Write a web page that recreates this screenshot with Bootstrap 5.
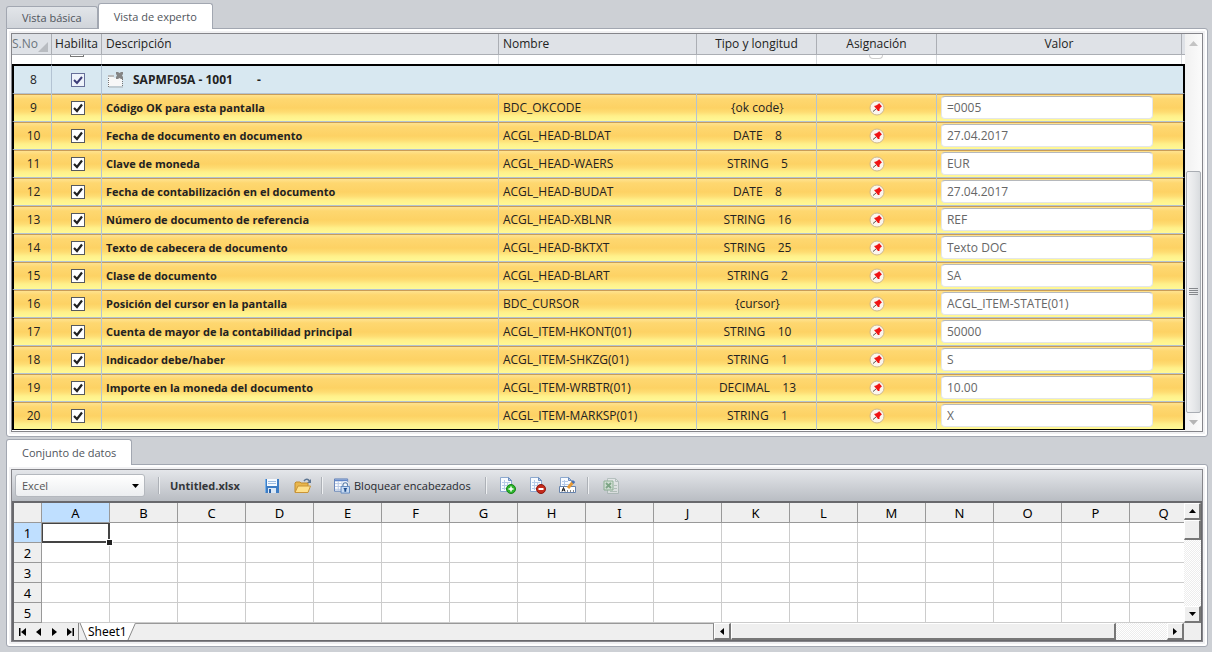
<!DOCTYPE html>
<html lang="es">
<head>
<meta charset="utf-8">
<meta name="viewport" content="width=device-width, initial-scale=1">
<title>Vista de experto</title>
<link href="https://cdn.jsdelivr.net/npm/bootstrap@5.3.0/dist/css/bootstrap.min.css" rel="stylesheet">
<style>
body{background:#cdd0d5;font:12px/16px "Open Sans","Noto Sans",sans-serif;color:#222}
button{font:inherit;padding:0}
main{padding:3px 4px 6px 6px}
/* tabs */
.nav-tabs{--bs-nav-tabs-border-width:0px;padding-left:0}
.nav-tabs .nav-link{margin:0;height:22px;padding:0 15px;border:1px solid #a2a7b1;border-bottom:0;border-radius:3px 3px 0 0;background:linear-gradient(#e2e5e9,#d0d4da);color:#50555c;font-size:11px;line-height:20px}
.nav-tabs .nav-link.active{height:26px;margin-bottom:-1px;background:#fff;border-color:#a2a7b1;color:#50555c;line-height:26px;position:relative;z-index:1}
.panel{background:#f1f1f3;border:1px solid #a2a7b1;border-radius:0 3px 3px 3px;padding:4px;box-shadow:inset 0 0 0 2px #fff}
.frame{border:1px solid #85858a;background:#fff}
.panel+.nav-tabs{margin-top:2px}
/* field grid */
.fields{table-layout:fixed;border-collapse:separate;border-spacing:0;width:100%;margin-bottom:1px}
.fields th{height:21px;background:#dfe2e7;border-right:1px solid #abaeb4;border-bottom:1px solid #abaeb4;font-weight:400;padding:0 4px;line-height:18px;white-space:nowrap;overflow:hidden}
.fields th.tight{padding:0}
.fields th.end,.fields .peek td.end{border-right:0}
.fields td{height:28px;padding:0 4px;border-right:1px solid #b3c3d3;border-bottom:1px solid #b3c3d3;vertical-align:middle;white-space:pre}
.fields td.text-center{padding:0 3px 0 5px}
.fields .peek td{height:9px;padding:0;border-bottom:0;border-color:#d5d8dc;line-height:0;vertical-align:top}
.fields .group td{height:30px;background:#d8e8f1;border-top:2px solid #000}
.fields .item td{background:linear-gradient(#c99d58 1px,#ffe38f 1px,#fed770 5px,#fdd264 14px,#fedc72 18px,#fff08a 22px,#fff996 27px)}
.fields .group td:first-child,.fields .item td:first-child{border-left:2px solid #000}
.fields .group td:last-child,.fields .item td:last-child{border-right:2px solid #000}
.fields .item:last-child td{border-bottom-color:#000}
.desc{font-weight:700;font-size:11px}
.stub{width:14px;height:2px;border:1px solid #777;border-top:0}
.arc{width:14px;height:4px;border:1px solid #ccc;border-top:0;border-radius:0 0 7px 7px}
.tick{appearance:none;width:14px;height:14px;margin:0;border:1px solid #55595e;background:#fff url("data:image/svg+xml,%3Csvg xmlns='http://www.w3.org/2000/svg' viewBox='0 0 12 12'%3E%3Cpath d='M2 6l3 3 5-6.5' fill='none' stroke='%23222' stroke-width='2.2'/%3E%3C/svg%3E");vertical-align:middle}
.tick.alt{border-color:#666f99;background-color:#eef3fb;background-image:url("data:image/svg+xml,%3Csvg xmlns='http://www.w3.org/2000/svg' viewBox='0 0 12 12'%3E%3Cpath d='M2 6l3 3 5-6' fill='none' stroke='%233c3c78' stroke-width='2'/%3E%3C/svg%3E")}
.val{display:block;width:212px;height:23px;border:1px solid #e3e6ea;border-top-color:#b5b8bc;border-radius:4px;padding:0 5px;background:#fff;color:#666;font-size:12px;line-height:16px}
.pin{width:16px;height:16px;border:0;background:none;line-height:0;display:inline-block;vertical-align:middle}
.vbar{flex:none;width:17px;background:linear-gradient(90deg,#f1f1f1,#fbfbfb)}
.vbar button{height:18px;border:0;background:none;line-height:0}
.grip{height:242px;margin:0 1px;border:1px solid #a9adb3;border-radius:2px;background:linear-gradient(90deg,#f3f3f4,#e5e7e9 60%,#d9dcdf)}
/* toolbar */
.tools{height:31px;padding:0 3px;background:linear-gradient(#e4e6ea,#b9bdc3);font-size:11px}
.tools button{border:0;background:none;line-height:16px;color:#26292e}
.tools svg{display:block}
.pick{appearance:none;width:130px;height:23px;border:1px solid #b4b8be;border-radius:3px;padding:0 6px;color:#555;font-size:11px;background:url("data:image/svg+xml,%3Csvg xmlns='http://www.w3.org/2000/svg' viewBox='0 0 8 4'%3E%3Cpath d='M0 0h7L3.500 4z'/%3E%3C/svg%3E") no-repeat right 4px center/8px 4px,linear-gradient(#fff,#eceef0)}
.rule{width:2px;height:17px;background:#adb1b7;border-right:1px solid #eef0f2}
.book-name{width:94px;font-weight:700;color:#33363a}
/* sheet */
.book{border:solid #68686c;border-width:2px 1px 1px 2px}
.view{overflow:hidden;height:120px;min-width:0}
.sheet{table-layout:fixed;border-collapse:separate;border-spacing:0;width:1184px;font-family:"Noto Sans",sans-serif;font-size:13px;color:#000}
.sheet th{background:#efefef;border-right:1px solid #999;border-bottom:1px solid #999;font-weight:400;text-align:center;padding:0;line-height:18px}
.sheet td{border-right:1px solid #ccc;border-bottom:1px solid #ccc;background:#fff;padding:0}
.sheet tr{height:20px}
.sheet .on{background:#bfdfff}
.sheet td.cur{position:relative;box-shadow:inset 0 0 0 1px #444;border-color:#444}
.cur::after{content:"";position:absolute;right:-3px;bottom:-3px;width:5px;height:5px;background:#222;outline:1px solid #fff}
.raised{background:#efefef;border:1px solid #fff;border-right:2px solid #777;border-bottom:2px solid #777;line-height:0;display:flex;align-items:center;justify-content:center}
.track{background:repeating-conic-gradient(#fff 0 25%,#ededed 0 50%) 0 0/2px 2px}
.sbar{flex:none;width:17px}
.sbar .raised,.hbar .raised{flex:none}
.foot{height:17px;background:#efefef}
.step{width:16px;border:0;background:none;line-height:0}
.leaf{font-size:12px;line-height:17px;color:#000;font-family:"Noto Sans",sans-serif}
.rest{border-top:1px solid #999;border-right:1px solid #888}
</style>
</head>
<body>
<main>
<ul class="nav nav-tabs align-items-end">
<li class="nav-item"><button class="nav-link" type="button">Vista básica</button></li>
<li class="nav-item"><button class="nav-link active" type="button">Vista de experto</button></li>
</ul>
<section class="panel">
<div class="frame d-flex">
<div class="flex-grow-1 overflow-hidden">
<table class="fields">
<colgroup><col style="width:40px"><col style="width:50px"><col><col style="width:198px"><col style="width:120px"><col style="width:120px"><col style="width:245px"><col style="width:3px"></colgroup>
<thead><tr>
<th class="tight"><div class="d-flex align-items-end text-secondary">S.No<svg class="flex-shrink-0" width="10" height="12"><path d="M10 1v10H0z" fill="#b9bcc1"/></svg></div></th>
<th class="tight text-center" style="line-height:16px">Habilita</th><th>Descripción</th><th>Nombre</th><th class="text-center">Tipo y longitud</th><th class="text-center">Asignación</th><th class="text-center">Valor</th><th class="tight end"></th>
</tr></thead>
<tbody id="rows">
<tr class="peek"><td></td><td><div class="stub mx-auto"></div></td><td></td><td></td><td></td><td><div class="arc mx-auto"></div></td><td></td><td class="end"></td></tr>
<tr class="group"><td class="text-center">8</td><td class="text-center"><input class="tick alt" type="checkbox" checked aria-label="Habilitar 8"></td>
<td colspan="6" class="fw-bold"><div class="d-flex align-items-center"><svg width="18" height="18"><path d="M2 5h5l1 2h8v8H2z" fill="#f7f7f7"/><path d="M2 4h6v2H2z" fill="#bbb"/><path d="M2.500 7v9h14V8" fill="none" stroke="#777" stroke-dasharray="1 1"/><path d="M10 1h2l1.500 1L15 1h2v2l-1 1.500 1 1.500v2h-2l-1.500-1L12 8h-2V6l1-1.500L10 3z" fill="#858585"/></svg><span style="margin-left:9px">SAPMF05A - 1001</span><span class="ms-4">-</span></div></td></tr>
</tbody>
</table>
</div>
<div class="vbar d-flex flex-column">
<button type="button" aria-label="Subir"><svg width="9" height="5"><path d="M0 5l4.500-5L9 5z" fill="#c4c4c4"/></svg></button>
<div class="flex-grow-1"></div>
<div class="grip d-flex align-items-center justify-content-center"><svg width="9" height="8"><path d="M0 .5h9M0 2.500h9M0 4.500h9M0 6.500h9" stroke="#85888c"/></svg></div>
<button type="button" aria-label="Bajar"><svg width="9" height="5"><path d="M0 0l4.500 5L9 0z" fill="#b5b5b5"/></svg></button>
</div>
</div>
</section>

<ul class="nav nav-tabs align-items-end">
<li class="nav-item"><button class="nav-link active" type="button">Conjunto de datos</button></li>
</ul>
<section class="panel">
<div class="frame">
<div class="tools d-flex align-items-center">
<select class="pick" aria-label="Origen de datos"><option>Excel</option></select>
<span class="rule" style="margin-left:13px"></span>
<span class="book-name" style="margin-left:10px">Untitled.xlsx</span>
<button type="button" aria-label="Guardar"><svg width="16" height="16"><path d="M1 1h14v14H2l-1-1z" fill="#3d7cc4"/><path d="M3 1h10v7H3z" fill="#f4f9ff"/><path d="M4 3.500h8M4 5.500h8" stroke="#9bbbe0"/><path d="M4 10h8v5H4z" fill="#dbe8f6"/><path d="M5 11h2v4H5z" fill="#2c62a6"/><path d="M1.500 1v13" stroke="#74b0ea"/></svg></button>
<button type="button" aria-label="Abrir" style="margin-left:14px"><svg width="18" height="16"><path d="M1 5l1-1h4l1 1h7v9H1z" fill="#e9b64c" stroke="#c18b2c"/><path d="M1 14.500L4 8h12.500L14 14.500z" fill="#ffe08a" stroke="#c99437"/><path d="M10 3c2-2.500 4-2 5.500 0" fill="none" stroke="#5c7593" stroke-width="1.500"/><path d="M17 1v4h-4z" fill="#5c7593"/></svg></button>
<span class="rule" style="margin-left:9px"></span>
<button type="button" class="d-flex align-items-center" style="margin-left:11px"><svg class="me-1" width="16" height="16" viewBox="0 0 17 16"><path d="M.5.5h14v13H.5z" fill="#fff" stroke="#5d7db5"/><path d="M1 1h13v2H1z" fill="#6287c8"/><path d="M4.500 3v10M8.500 3v10M1 5.500h13M1 8.500h13M1 11.500h13" stroke="#b3c5e3"/><path d="M9.500 9V7q0-2.500 2.500-2.500T14.500 7v2" fill="none" stroke="#eef4fa" stroke-width="3"/><path d="M9.500 9V7q0-2.500 2.500-2.500T14.500 7v2" fill="none" stroke="#5f7fa8" stroke-width="1.200"/><path d="M7.500 8.500h9v7h-9z" fill="#c9dcf3" stroke="#5f87be"/><path d="M10 10h4l-1 2v2h-2v-2z" fill="#214f8e"/></svg>Bloquear encabezados</button>
<span class="rule" style="margin-left:14px"></span>
<button type="button" aria-label="Añadir hoja" style="margin-left:12px"><svg width="17" height="17"><path d="M1.500.5h8l3 3v11h-11z" fill="#f8fbff" stroke="#8da9cf"/><path d="M9.500.5v3h3z" fill="#b4c9e8" stroke="#6b8dbe"/><path d="M3 5.500h8M3 8.500h8M3 11.500h8M5.500 3v10M8.500 5v8" stroke="#b5cae8"/><circle cx="12" cy="12" r="4.500" fill="#2cb62c" stroke="#168216"/><path d="M12 9.500v5M9.500 12h5" stroke="#fff" stroke-width="1.500"/></svg></button>
<button type="button" aria-label="Quitar hoja" style="margin-left:13px"><svg width="17" height="17"><path d="M1.500.5h8l3 3v11h-11z" fill="#f8fbff" stroke="#8da9cf"/><path d="M9.500.5v3h3z" fill="#b4c9e8" stroke="#6b8dbe"/><path d="M3 5.500h8M3 8.500h8M3 11.500h8M5.500 3v10M8.500 5v8" stroke="#b5cae8"/><circle cx="12" cy="12" r="4.500" fill="#c52a1b" stroke="#8c170f"/><path d="M9.500 12h5" stroke="#fff" stroke-width="2"/></svg></button>
<button type="button" aria-label="Renombrar hoja" style="margin-left:13px"><svg width="17" height="17"><path d="M1.500.5h8l3 3v11h-11z" fill="#f8fbff" stroke="#8da9cf"/><path d="M9.500.5v3h3z" fill="#b4c9e8" stroke="#6b8dbe"/><path d="M3 4.500h6M3 7.500h8M5.500 3v6" stroke="#b5cae8"/><path d="M.5 9.500h16v6H.5z" fill="#fff" stroke="#6683ad"/><path d="M3 14.500l1.500-4 1.500 4M3.500 13h2M8 14h1M11 14h1M14 14h1" fill="none" stroke="#111"/><path d="M9 11l5-6" stroke="#e89a33" stroke-width="3"/><path d="M13.500 6l1.500-2" stroke="#4670b5" stroke-width="3"/></svg></button>
<span class="rule" style="margin-left:11px"></span>
<button type="button" aria-label="Abrir en Excel" disabled style="margin-left:14px"><svg width="17" height="16" opacity=".5"><path d="M4.500.5h8l3 3v12h-11z" fill="#eef2ee" stroke="#94a8a0"/><path d="M12.500.5v3h3" fill="none" stroke="#94a8a0"/><path d="M1 3h9v9H1z" fill="#d5ead2" stroke="#4d9052"/><path d="M3 5l5 5M8 5l-5 5" stroke="#2d7a36" stroke-width="1.800"/><path d="M11 7.500h3M11 10.500h3M7 13.500h7" stroke="#99b2a1"/></svg></button>
</div>
<div class="book">
<div class="d-flex">
<div class="view flex-grow-1"><table class="sheet" id="sheet"></table></div>
<div class="sbar track d-flex flex-column">
<button class="raised" type="button" style="height:17px" aria-label="Fila anterior"><svg width="7" height="4"><path d="M0 4l3.500-4L7 4z"/></svg></button>
<div class="raised" style="height:20px"></div><div class="flex-grow-1"></div>
<button class="raised" type="button" style="height:17px" aria-label="Fila siguiente"><svg width="7" height="4"><path d="M0 0l3.500 4L7 0z"/></svg></button>
</div>
</div>
<div class="foot d-flex">
<button class="step" type="button" aria-label="Primera"><svg width="7" height="8"><path d="M0 0h1.500v8H0zM7 0v8L2 4z"/></svg></button>
<button class="step" type="button" aria-label="Anterior"><svg width="5" height="8"><path d="M5 0v8L0 4z"/></svg></button>
<button class="step" type="button" aria-label="Siguiente"><svg width="5" height="8"><path d="M0 0v8l5-4z"/></svg></button>
<button class="step" type="button" aria-label="Última"><svg width="7" height="8"><path d="M5.500 0H7v8H5.500zM0 0v8l5-4z"/></svg></button>
<svg width="10" height="17"><path d="M2 0h8v17H9z" fill="#fff"/><path d="M.5 0v17M2 0l7 17" fill="none" stroke="#888"/></svg>
<span class="bg-white leaf">Sheet1</span>
<svg width="9" height="17"><path d="M0 0h9L1 17H0z" fill="#fff"/><path d="M8.500 0L1 17" stroke="#888"/></svg>
<div class="rest flex-grow-1"></div>
<div class="hbar track d-flex" style="width:470px">
<button class="raised" type="button" style="width:17px" aria-label="Columna anterior"><svg width="4" height="7"><path d="M4 0v7L0 3.500z"/></svg></button>
<div class="raised" style="width:385px"></div><div class="flex-grow-1"></div>
<button class="raised" type="button" style="width:17px" aria-label="Columna siguiente"><svg width="4" height="7"><path d="M0 0v7l4-3.500z"/></svg></button>
</div>
<div class="sbar"></div>
</div>
</div>
</div>
</section>
</main>
<script src="https://cdn.jsdelivr.net/npm/bootstrap@5.3.0/dist/js/bootstrap.bundle.min.js"></script>
<script>
const items=[
['Código OK para esta pantalla','BDC_OKCODE','{ok code}','=0005'],
['Fecha de documento en documento','ACGL_HEAD-BLDAT','DATE    8','27.04.2017'],
['Clave de moneda','ACGL_HEAD-WAERS','STRING    5','EUR'],
['Fecha de contabilización en el documento','ACGL_HEAD-BUDAT','DATE    8','27.04.2017'],
['Número de documento de referencia','ACGL_HEAD-XBLNR','STRING    16','REF'],
['Texto de cabecera de documento','ACGL_HEAD-BKTXT','STRING    25','Texto DOC'],
['Clase de documento','ACGL_HEAD-BLART','STRING    2','SA'],
['Posición del cursor en la pantalla','BDC_CURSOR','{cursor}','ACGL_ITEM-STATE(01)'],
['Cuenta de mayor de la contabilidad principal','ACGL_ITEM-HKONT(01)','STRING    10','50000'],
['Indicador debe/haber','ACGL_ITEM-SHKZG(01)','STRING    1','S'],
['Importe en la moneda del documento','ACGL_ITEM-WRBTR(01)','DECIMAL    13','10.00'],
['','ACGL_ITEM-MARKSP(01)','STRING    1','X']];
const pin='<svg width="16" height="16"><circle cx="8" cy="8" r="7" fill="#fbf5ee" stroke="#cfb98c"/><path d="M4 11.500L7 9" stroke="#555"/><path d="M5 6l2-.5L9.500 4l.5-1 3 3.500-1 .5-1.500 2v2L9 11z" fill="#f01414"/></svg>';
document.getElementById('rows').insertAdjacentHTML('beforeend',items.map((r,i)=>`<tr class="item"><td class="text-center">${i+9}</td><td class="text-center"><input class="tick" type="checkbox" checked aria-label="Habilitar ${i+9}"></td><td class="desc">${r[0]}</td><td>${r[1]}</td><td class="text-center">${r[2]}</td><td class="text-center"><button type="button" class="pin" aria-label="Asignación ${i+9}">${pin}</button></td><td colspan="2"><input class="val" type="text" value="${r[3]}" aria-label="Valor ${i+9}"></td></tr>`).join(''));
const cols=[...'ABCDEFGHIJKLMNOPQ'];
let h='<colgroup><col style="width:28px"></colgroup><tr><th></th>'+cols.map(c=>`<th class="${c=='A'?'on':''}">${c}</th>`).join('')+'</tr>';
for(let n=1;n<6;n++)h+=`<tr><th class="${n==1?'on':''}">${n}</th>`+cols.map(c=>`<td class="${n==1&&c=='A'?'cur':''}"></td>`).join('')+'</tr>';
document.getElementById('sheet').innerHTML=h;
</script>
</body>
</html>
